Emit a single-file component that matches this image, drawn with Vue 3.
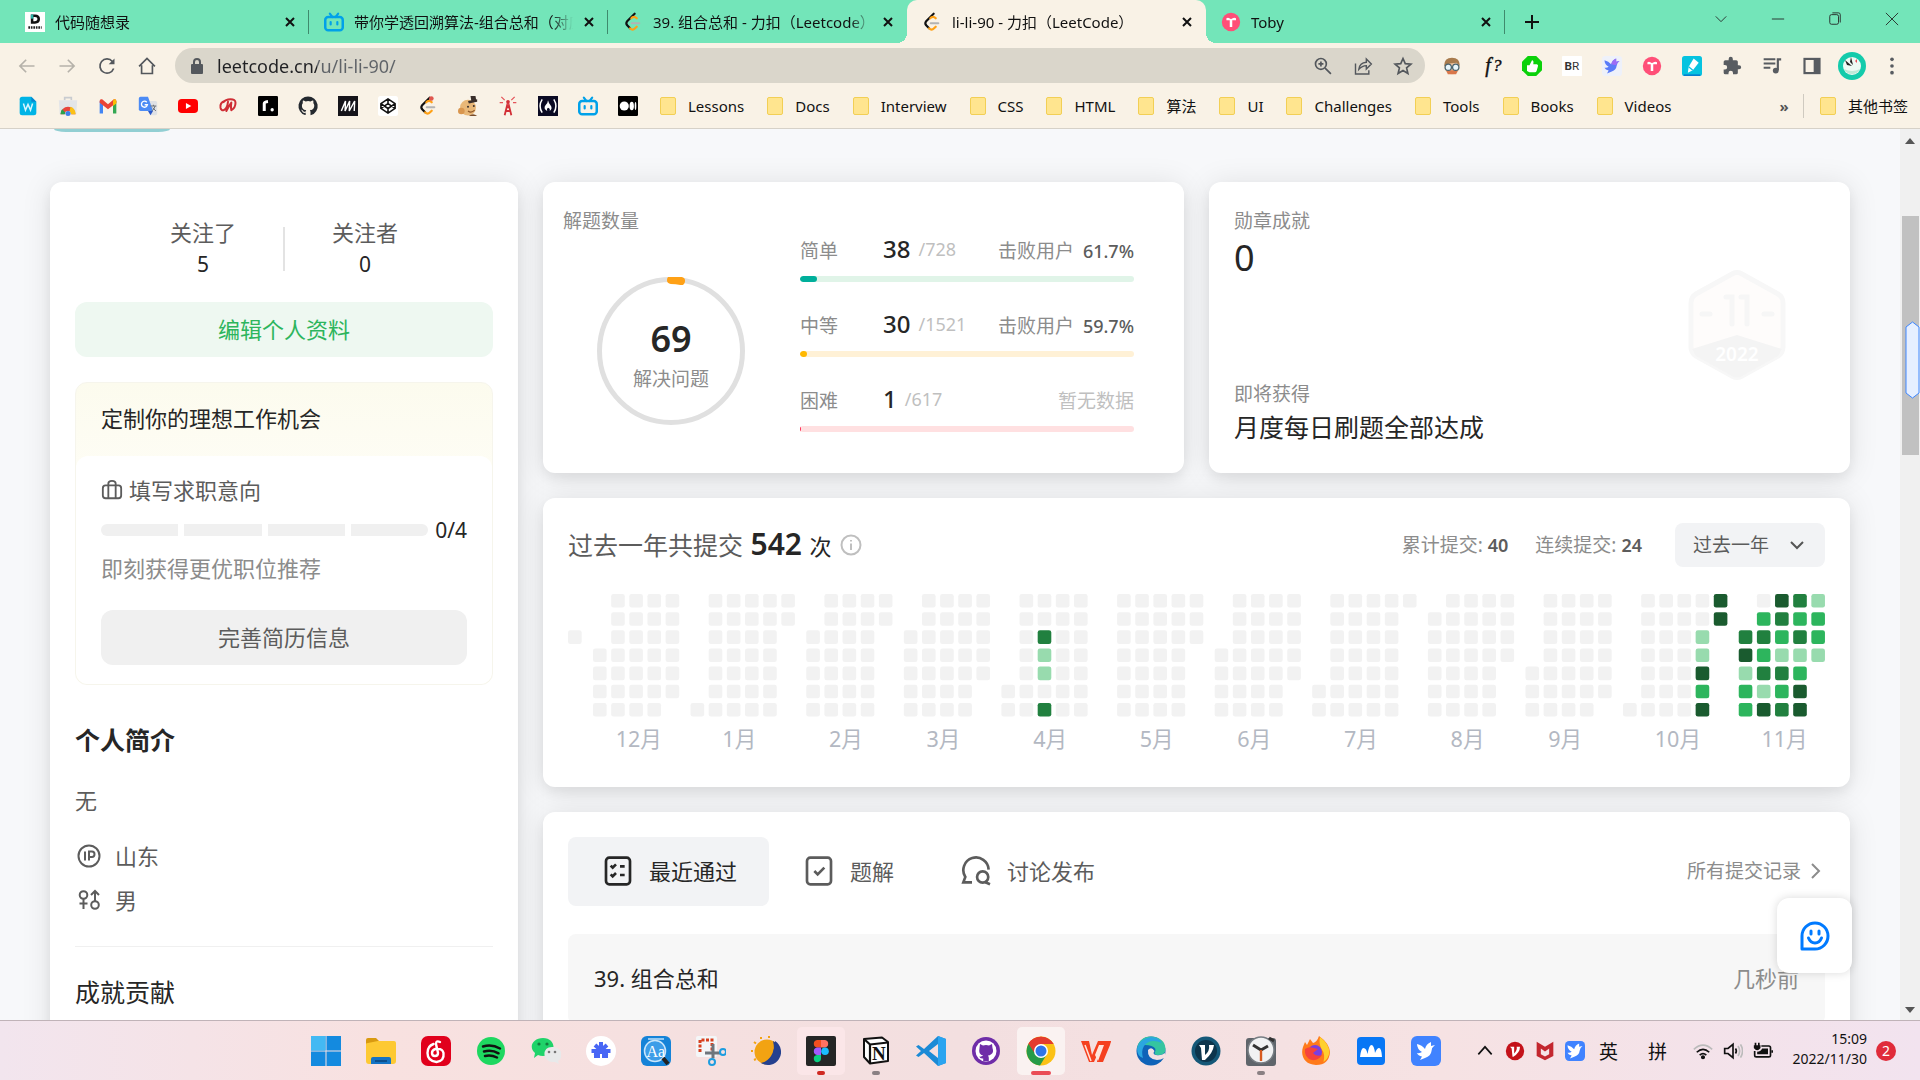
<script setup>
import { ref } from 'vue'

const leetLogo =
  '<path d="M14 2 5 11q-2 2.500 0 5l3.500 3.600" fill="none" stroke="#111" stroke-width="2.600" stroke-linecap="round"/><path d="M8.500 19.600q3 3 6 0l2-2M10 7.500l1.500-1.200q2.500-1.500 5 1.200" fill="none" stroke="#ffa116" stroke-width="2.600" stroke-linecap="round"/><path d="M10.500 13.500h9" stroke="#b3b3b3" stroke-width="2.600" stroke-linecap="round"/>'
const biliLogo =
  '<path d="m7 2 3 4M17 2l-3 4" stroke="#00a1e9" stroke-width="2.600" stroke-linecap="round"/><rect x="1.500" y="6" width="21" height="16" rx="3.500" fill="none" stroke="#00a1e9" stroke-width="3"/><path d="M8 12v3M16 12v3" stroke="#00a1e9" stroke-width="2.600" stroke-linecap="round"/>'
const tobyLogo =
  '<circle cx="12" cy="12" r="11" fill="#ff4f78"/><path d="M6.500 7.500q2-1.500 3.500 0 2 1.500 4 0 2-1.500 4 0v2.500h-4.500v8h-3v-8h-4z" fill="#fff"/>'
const birdShape =
  'M3 5q5 1 8 5 1-5 6-7v4l4-1q-3 2-3.500 6-.500 5-6.500 7l-5 2 2-3.500q-4-1-5-3.500 3 .5 5-1-5-3-5-8z'

const tabs = ref([
  {
    title: '代码随想录',
    icon: '<rect width="24" height="24" fill="#fff"/><path d="M7 3h5q6 0 6 5.500T12 14H7zM10 6v5h2q3 0 3-2.500T12 6z" fill="#111" fill-rule="evenodd"/><path d="M7 3h3v5H7z" fill="#29b6a8"/><path d="M4 18.500h16" stroke="#222" stroke-width="3" stroke-dasharray="2 1"/>',
  },
  { title: '带你学透回溯算法-组合总和（对应', icon: biliLogo },
  { title: '39. 组合总和 - 力扣（Leetcode）', icon: leetLogo },
  { title: 'li-li-90 - 力扣（LeetCode）', icon: leetLogo, active: true },
  { title: 'Toby', icon: tobyLogo },
])

const navIcons = [
  { label: '后退', dim: true, icon: '<path d="M21 12H4m7-7.500L3.500 12l7.500 7.500"/>' },
  { label: '前进', dim: true, icon: '<path d="M3 12h17m-7-7.500 7.500 7.500-7.500 7.500"/>' },
  { label: '重新加载', icon: '<path d="M20 15a8.500 8.500 0 1 1-1.500-8.500l1 1.500"/><path d="M21 3v7h-7z" fill="#53575c" stroke="none"/>' },
  { label: '主页', icon: '<path d="M2.500 12.500 12 3l9.500 9.500M5.500 11v10h13V11"/>' },
]

const addressIcons = [
  { label: '缩放', icon: '<circle cx="9.500" cy="9.500" r="6.500"/><path d="m14.500 14.500 7 7M9.500 6.500v6M6.500 9.500h6"/>' },
  { label: '分享', icon: '<path d="M3 9v12.500h16V17M7 16q1-8 9-8.500V3.500l6 6-6 6v-4q-5 0-9 4.500z" stroke-width="1.700"/>' },
  { label: '收藏', icon: '<path d="m12 3 2.700 6.200 6.800.6-5.200 4.500 1.600 6.700L12 17.500 6.100 21l1.600-6.700-5.200-4.500 6.800-.6z"/>' },
]

const extensions = [
  '<circle cx="12" cy="13" r="9" fill="#f1c7a3"/><path d="M2.500 12q0-10 9.500-10t9.500 10l-4-4-8 1-5 2z" fill="#a87b4d"/><path d="M5 17h14l-2 5H7z" fill="#d9774a"/><circle cx="7.500" cy="13.500" r="3.800" fill="#e9f6fb" stroke="#49646f" stroke-width="1.500"/><circle cx="16.500" cy="13.500" r="3.800" fill="#e9f6fb" stroke="#49646f" stroke-width="1.500"/>',
  '<text x="4" y="19" font-family="Liberation Serif, serif" font-style="italic" font-size="24" fill="#111" stroke="#111" stroke-width=".5">f</text><text x="13" y="18" font-family="Liberation Serif, serif" font-style="italic" font-size="21" fill="#111" stroke="#111" stroke-width=".5">?</text>',
  '<path d="M7 0h10l7 7v10l-7 7H7l-7-7V7z" fill="#0bd10b"/><path d="M6 11h3l3-6q2.500 0 1.500 5H18q2 1 1 3l-1.500 5q-.500 1.500-2 1.500H9L6 18z" fill="#fff"/>',
  '<rect width="24" height="24" rx="1" fill="#fff"/><text x="3" y="17" font-family="Roboto, sans-serif" font-size="14" font-weight="700" fill="#333">B<tspan font-weight="400">R</tspan></text>',
  '<rect width="24" height="24" rx="4" fill="#eef1fa"/><path d="' + birdShape + '" fill="#5a7cf8"/><path d="M11 10q1-5 6-7v4l4-1q-3 2-4 5z" fill="#9d6cf5"/>',
  tobyLogo,
  '<rect width="24" height="24" rx="3" fill="#06c3e0"/><path d="m14 3 6 5-7 9-6 3 1-7z" fill="#fff"/><path d="m8 13 5 4" stroke="#06c3e0" stroke-width="1.500"/><path d="M2 23h20" stroke="#067fd0" stroke-width="2"/>',
  '<path d="M20.500 11H19V7a2 2 0 0 0-2-2h-4V3.500a2.500 2.500 0 0 0-5 0V5H4a2 2 0 0 0-2 2v3.800h1.500a2.700 2.700 0 0 1 0 5.400H2V20a2 2 0 0 0 2 2h3.800v-1.500a2.700 2.700 0 0 1 5.400 0V22H17a2 2 0 0 0 2-2v-4h1.500a2.500 2.500 0 0 0 0-5z" fill="#585c61"/>',
  '<path d="M2 4h14M2 9h14M2 14h8" stroke="#585c61" stroke-width="2.400"/><path d="M19 17V4h4" fill="none" stroke="#585c61" stroke-width="2.600"/><circle cx="16.500" cy="17.500" r="3.500" fill="#585c61"/>',
  '<rect x="3" y="3.500" width="18" height="17" fill="none" stroke="#585c61" stroke-width="2.600"/><path d="M14 3.500h7v17h-7z" fill="#585c61"/>',
]

const bookmarkIcons = [
  '<path d="M5 1h11l6 6v13q0 3-3 3H5q-3 0-3-3V4q0-3 3-3z" fill="#00b4e6"/><path d="M16 1v6h6z" fill="#0787cf"/><path d="m6.500 9 2.500 8 3-7 3 7 2.500-8" fill="none" stroke="#d8f6ff" stroke-width="1.800"/>',
  '<path d="M8 5V2h8v3" fill="none" stroke="#c9ccd0" stroke-width="2"/><path d="M1 5h22l-1 17H2z" fill="#e3e5e8"/><path d="M3 22a9 9 0 0 1 18 0h-5a4 4 0 0 0-8 0z" fill="#e8453c"/><path d="M3 22q0-4 2-6l4 4-1 2z" fill="#2ba24c"/><path d="M15 13q6 2 6 9h-5l-2-4z" fill="#fbc116"/><circle cx="12" cy="21" r="3" fill="#3f7fe8"/>',
  '<path d="M2 21V6l4 3v12z" fill="#4285f4"/><path d="M18 9l4-3v15h-4z" fill="#34a853"/><path d="M2 6q0-3 3-2l7 6 7-6q3-1 3 2v2l-10 8L2 8z" fill="#ea4335"/><path d="m18 6 1-2q3-1 3 2v3l-4 3z" fill="#fbbc04"/>',
  '<path d="M9 6h12q2 0 2 2v13q0 2-2 2h-6z" fill="#dfe1e5"/><path d="M3 1h9l6 17H3q-2 0-2-2V3q0-2 2-2z" fill="#4c8bf5"/><path d="m12 18h6l-3 5z" fill="#2a56c6"/><path d="M10.500 7.500a3.600 3.600 0 1 0 .8 3H8" fill="none" stroke="#fff" stroke-width="1.600"/><path d="M15 12h7m-3.500-1.500V12m2 0q-1 4-4 6m1-4 4 4" fill="none" stroke="#6b7077" stroke-width="1.200"/>',
  '<rect y="3.500" width="24" height="17" rx="4.500" fill="#f00"/><path d="m9.500 8.500 6.500 3.500-6.500 3.500z" fill="#fff"/>',
  '<path d="M8 6Q2 8 3 14q1 4 4 3 4-2 5-10-1 6-2 11 3-6 6-10-1 5 0 9 5-3 5-9 0-4-6-4-6 0-9 4" fill="none" stroke="#cf2e35" stroke-width="2.400" stroke-linejoin="round"/>',
  '<rect width="24" height="24" rx="1.500"/><path d="M7.500 18V9q0-2 4.500-2.500" fill="none" stroke="#fff" stroke-width="3.600"/><circle cx="17" cy="16.500" r="2" fill="#fff"/>',
  '<path d="M12 .5a11.500 11.500 0 0 0-3.600 22.400c.6.1.8-.2.800-.5v-2.200c-3.200.7-3.900-1.300-3.900-1.300-.5-1.300-1.300-1.700-1.300-1.700-1-.7.1-.7.100-.7 1.200.1 1.800 1.200 1.800 1.200 1 1.800 2.700 1.300 3.300 1 .1-.8.400-1.300.7-1.600-2.500-.3-5.200-1.300-5.200-5.700 0-1.200.4-2.300 1.200-3.100-.1-.3-.5-1.500.1-3 0 0 1-.3 3.200 1.200a11 11 0 0 1 5.800 0c2.200-1.500 3.200-1.200 3.200-1.200.6 1.500.2 2.700.1 3 .8.800 1.200 1.900 1.200 3.100 0 4.400-2.700 5.400-5.300 5.700.4.400.8 1.100.8 2.100v3.200c0 .3.200.7.800.5A11.500 11.500 0 0 0 12 .5z" fill="#24292f"/>',
  '<rect width="24" height="24" fill="#15141a"/><path d="m4 18 5-12-.5 12 5.500-12-.5 12L20 6l-.5 12" fill="none" stroke="#fff" stroke-width="1.700"/>',
  '<rect width="24" height="24" rx="3" fill="#fff"/><path d="m12 3.500 8.500 5.600v5.800L12 20.500l-8.500-5.600V9.100zM12 3.500v5.600m0 11.400v-5.600M3.500 9.100 12 15l8.500-5.900M3.500 14.900 12 9.100l8.500 5.800" fill="none" stroke="#111" stroke-width="1.900" stroke-linejoin="round"/>',
  leetLogo + '<circle cx="16" cy="3" r="2.800" fill="#e0574f"/>',
  '<circle cx="12" cy="14" r="9.500" fill="#e9b878"/><circle cx="4" cy="18" r="4" fill="#d9964f"/><path d="M12 6 23 4v3l-10 2zM15 0h6l1 6h-6z" fill="#3a2f2b"/><circle cx="12" cy="13" r="1.200" fill="#3a2f2b"/><circle cx="19" cy="12" r="1.200" fill="#3a2f2b"/><path d="M12 18q4 3 8-1" fill="none" stroke="#8d5526" stroke-width="1.500"/><path d="M13 24q5-4 10 0z" fill="#7a4d2b"/>',
  '<path d="m8 23 3.500-14h1L16 23M9 18h6m-5-4.500h4" stroke="#d22f36" stroke-width="2.200" fill="none"/><path d="M12 8v3M4 1l4 4M20 1l-4 4M2 8h4m16 0h-4" stroke="#e4545a" stroke-width="1.500"/><circle cx="12" cy="7" r="2.200" fill="#d22f36"/>',
  '<rect width="24" height="24" fill="#0a0a23"/><path d="M5 4q-5 8 0 16M19 4q5 8 0 16" fill="none" stroke="#fff" stroke-width="1.800"/><path d="M12 5q1 4 3 6 3 4-1 7 1-3-2-4-2 1-1 4-5-3-2-7 3-3 3-6z" fill="#fff"/>',
  biliLogo,
  '<rect width="24" height="24" rx="1.500"/><circle cx="7.500" cy="12" r="5.500" fill="#fff"/><ellipse cx="16.500" cy="12" rx="2.600" ry="5.200" fill="#fff"/><ellipse cx="21" cy="12" rx="1" ry="4.700" fill="#fff"/>',
]

const folders = ['Lessons', 'Docs', 'Interview', 'CSS', 'HTML', '算法', 'UI', 'Challenges', 'Tools', 'Books', 'Videos']

const levels = [
  { key: 'easy', name: '简单', done: 38, total: 728, beat: '61.7%', bar: 5 },
  { key: 'medium', name: '中等', done: 30, total: 1521, beat: '59.7%', bar: 2 },
  { key: 'hard', name: '困难', done: 1, total: 617, beat: '', bar: 0.3 },
]

/* Submission levels by "month-day". */
const heat = {
  '4-12': 3, '4-13': 1, '4-14': 1, '4-16': 3,
  '10-25': 1, '10-26': 1, '10-27': 4, '10-28': 2, '10-29': 4, '10-30': 4, '10-31': 4,
}
;[3, 4, 1, 2, 2, 0, 2, 3, 2, 3, 1, 4, 4, 3, 2, 1, 3, 2, 3, 3, 2, 3, 1, 2, 4, 4, 1, 2, 2, 1].forEach((v, i) => {
  heat['11-' + (i + 1)] = v
})

const STEP = 16
const cells = [{ x: 0, y: 2 * STEP, level: 0 }]
const months = []
let left = STEP + 6
for (let m = 0; m < 12; m++) {
  const first = new Date(2021, 11 + m, 1)
  const days = new Date(2021, 12 + m, 0).getDate()
  const month = first.getMonth() + 1
  for (let d = 1; d <= days; d++) {
    const slot = first.getDay() + d - 1
    cells.push({
      x: left + Math.floor(slot / 7) * STEP,
      y: (slot % 7) * STEP,
      level: heat[month + '-' + d] || 0,
    })
  }
  const weeks = Math.floor((first.getDay() + days) / 7) + 1
  months.push({ name: month + '月', x: left + (weeks * STEP) / 2 - 20 })
  left += weeks * STEP + 6
}

const range = ref('过去一年')

const sections = [
  { name: '最近通过', active: true, icon: '<rect x="3" y="2" width="18" height="20" rx="2.500"/><path d="m6.500 8 1.500 1.500L10.500 7M6.500 14.500 8 16l2.500-2.500M13.500 8.500H17M13.500 15H17"/>' },
  { name: '题解', icon: '<rect x="3" y="2" width="18" height="20" rx="2.500"/><path d="m8.500 12 2.500 2.500 5-5"/>' },
  { name: '讨论发布', icon: '<path d="M21.500 11A9.500 9.500 0 1 0 4 16.500L2.500 20.500H9"/><circle cx="17" cy="16.500" r="4.200"/><path d="M19 20.500 22.500 22"/>' },
]

const apps = [
  { name: '开始', icon: '<path d="M0 0h14.500v14.500H0zM15.500 0H30v14.500H15.500zM0 15.500h14.500V30H0zM15.500 15.500H30V30H15.500z" fill="#148adf"/><path d="M0 0h14.500v14.500H0z" fill="#43b9f3"/>' },
  { name: '文件资源管理器', icon: '<path d="M0 4q0-2 2-2h8l3 3v6H0z" fill="#d99a10"/><path d="M0 8q0-1 2-1l10-2h16q2 0 2 2v18q0 3-3 3H3q-3 0-3-3z" fill="#fdc933"/><path d="M5 28v-5q0-2 2-2h16q2 0 2 2v5z" fill="#1473c4"/><path d="M9 25h12" stroke="#0b4f8d" stroke-width="2"/>' },
  { name: '网易云音乐', icon: '<rect width="30" height="30" rx="7" fill="#e1001c"/><path d="M19 6q-4-2-4 2l2 9q0 3-3 3t-3-3q0-3 3.500-4 7-1 8 4 1 8-7 9-9-1-9-9 0-7 6-9" fill="none" stroke="#fff" stroke-width="2.400" stroke-linecap="round"/>' },
  { name: 'Spotify', icon: '<circle cx="15" cy="15" r="14" fill="#1ed760"/><path d="M7 10.500q9-2.500 17 2M8 15.500q8-2 14.500 1.800M9 20q6-1.500 12 1.500" fill="none" stroke="#111" stroke-width="2.500" stroke-linecap="round"/>' },
  { name: '微信', icon: '<path d="M12 2c14 0 14 18 0 18q-3 0-5-1l-4 3 1-5C-3 11 2 2 12 2z" fill="#1fd36a"/><circle cx="8" cy="8" r="1.600" fill="#137c3f"/><circle cx="16" cy="8" r="1.600" fill="#137c3f"/><path d="M21 11c12 0 11 12 6 14l1 3-4-2c-13 1-14-15-3-15z" fill="#e8e9ea"/><circle cx="18" cy="16" r="1.300" fill="#777"/><circle cx="24" cy="16" r="1.300" fill="#777"/>' },
  { name: '百度网盘', icon: '<circle cx="15" cy="15" r="15" fill="#fff"/><path d="M15 6v12M5.500 15h19M9 9l12 11M21 9 9 20" stroke="#4866f5" stroke-width="4"/><path d="M8 16h14v6H8z" fill="#4866f5"/><path d="M15 18v5" stroke="#fff" stroke-width="2"/>' },
  { name: '欧路词典', icon: '<rect width="30" height="30" rx="6" fill="#1583d8"/><circle cx="14" cy="15" r="10.500" fill="#3d9de8" stroke="#c9e6fb" stroke-width="1.500"/><text x="5.500" y="20.500" font-family="Liberation Serif, serif" font-size="16" fill="#fff">Aa</text><path d="m22 22 5 6" stroke="#222" stroke-width="4"/><path d="M7 3h16" stroke="#bfe1fa" stroke-width="1.500"/>' },
  { name: '截图工具', icon: '<rect width="21" height="21" rx="2" fill="#f4f6f8"/><path d="M4 16V4h12v12" fill="none" stroke="#d8401f" stroke-width="3" stroke-dasharray="3 1.500"/><path d="M17 8v14M9 17h15" stroke="#6e757c" stroke-width="3"/><circle cx="16" cy="26" r="3" fill="none" stroke="#1d9de0" stroke-width="2"/><circle cx="27" cy="16" r="3" fill="none" stroke="#1d9de0" stroke-width="2"/>' },
  { name: '夜间模式', icon: '<circle cx="16" cy="16" r="12.500" fill="#f2a312"/><path d="M24 5a12.500 12.500 0 0 1-14 22Q23 24 24 5z" fill="#25418f"/><path d="M22 5q9 5 6 14-4 11-16 9 14-6 10-23z" fill="#25418f"/><path d="M10 1v2M18 0v2M3 6l2 1.500M0 15h2M3 24l2-1" stroke="#f2a312" stroke-width="2"/>' },
  { name: 'Figma', state: 'open', icon: '<rect width="30" height="30" rx="2" fill="#252626"/><path d="M15 4h-4a3.800 3.800 0 0 0 0 7.500h4z" fill="#f24e1e"/><path d="M15 4h4a3.800 3.800 0 0 1 0 7.500h-4z" fill="#ff7262"/><path d="M15 11.500h-4a3.800 3.800 0 0 0 0 7.500h4z" fill="#a259ff"/><circle cx="19" cy="15.200" r="3.800" fill="#1abcfe"/><path d="M15 19h-4a3.600 3.600 0 1 0 4 3.600z" fill="#0acf83"/>' },
  { name: 'Notion', state: 'running', icon: '<path d="m3 3 18-1.500 6 4.500v19L9 27.500 3 21z" fill="#fff" stroke="#111" stroke-width="2" stroke-linejoin="round"/><path d="m3 3 6 5.500v19M9 8.500 27 6.500" fill="none" stroke="#111" stroke-width="2.200"/><text x="11" y="24" font-family="Liberation Serif, serif" font-weight="700" font-size="19" fill="#111">N</text>' },
  { name: 'VS Code', icon: '<path d="M22 0 8 13 2.500 9 0 10.500 5 15l-5 4.500L2.500 21 8 17l14 13 8-3V3zM22 8v14l-9-7z" fill="#1b8ad6" fill-rule="evenodd"/><path d="m22 0 8 3v24l-8 3z" fill="#2aa4f0"/>' },
  { name: 'GitHub Desktop', icon: '<circle cx="15" cy="15" r="14" fill="#6f2da8"/><circle cx="15" cy="15" r="10.500" fill="#fff"/><path d="m9 8 3 1.500q3-1 6 0L21 8l.5 4q1.500 4-1 6-2 1.500-3.500 1.500.8 1 .8 2.500v3h-5.600v-2.500q-3 .5-4-2 2 .500 4-1Q7 19 8.500 12z" fill="#6f2da8"/>' },
  { name: 'Chrome', state: 'focus', icon: '<circle cx="15" cy="15" r="14.500" fill="#fbc116"/><path d="M2.500 7.700A14.500 14.500 0 0 1 27.500 8H15z" fill="#e33b2e"/><path d="M2.500 7.700A14.500 14.500 0 0 0 14 29.500L21 18l-6 3z" fill="#269b48"/><path d="M2.500 7.700A14.500 14.500 0 0 1 27.500 8H15q-6 1-6.500 9z" fill="#e33b2e"/><circle cx="15" cy="15" r="7" fill="#fff"/><circle cx="15" cy="15" r="5.500" fill="#2f75e8"/>' },
  { name: 'WPS', icon: '<path d="M0 5h8l3 14L17 5h13l-9 21h-5l1-9-4 9H8z" fill="#f5401f"/><path d="m18 9-4 10 3 6 6-16z" fill="#ffe4db"/><path d="M19 5h11l-1 4-7 17h-4l6-17h-6z" fill="#f5401f"/><path d="M4 9l6 16" stroke="#ffe4db" stroke-width="1.500"/>' },
  { name: 'Edge', icon: '<circle cx="15" cy="15" r="14.500" fill="#0f63b8"/><path d="M1 13Q3 0 16 .5 29 2 29.500 13q0 6-7 6-4 0-4-2 3-5-3-7Q6 7 1 13z" fill="#35c5a0"/><path d="M1 13Q4 2 15 1q8 0 11 6Q14 2 8 10q-3 5-1 12Q1 20 1 13z" fill="#2ba6e0"/><path d="M12 14q-1 9 9 10 4 0 7-2l2 2-1-7q-4 3-9 2-4-1-1.500-4-3-5-6.500-1z" fill="#f3e1e2"/>' },
  { name: 'V2rayN', icon: '<circle cx="15" cy="15" r="14.500" fill="#155878"/><circle cx="15" cy="15" r="11" fill="#0d354c"/><path d="M8 9h6v10q5-4 4-10h5q-1 8-9 15h-3l-1-12z" fill="#fff"/>' },
  { name: '时钟', state: 'running', icon: '<rect y="2" width="30" height="28" rx="3" fill="#5f656b"/><circle cx="15" cy="14" r="13" fill="#f1f2f3" stroke="#777d83" stroke-width="1.500"/><path d="m7 9 8 5 7-4" fill="none" stroke="#333" stroke-width="3"/><path d="M15 14v11" stroke="#d85b1f" stroke-width="2.400"/><path d="m23 2 5 3" stroke="#333" stroke-width="3"/>' },
  { name: 'Firefox', icon: '<path d="M15 29C4 29-1 20 2 11l2-5 2 3 3-6 3 4q4-1 6-7 10 7 11 16-1 13-14 13z" fill="#ff7a1a"/><path d="M19 1q9 7 9.500 15-1 7-6 10 2-8-2-13-3-6-1.500-12z" fill="#ffd02e"/><circle cx="14" cy="16" r="7" fill="#7a3fe0"/><path d="M4 13q4-3 9-1l4 1-5 4q3 4 9 2-4 6-10 5-8-2-7-11z" fill="#f5423c"/>' },
  { name: '腾讯会议', icon: '<rect x="1" y="1" width="28" height="28" rx="4" fill="#0877f5"/><path d="M4 21q1-9 3.500-9 3 0 4 6 1.500-9 4-9t3.500 8q2-5 4-5 2.500 0 3 9z" fill="#fff"/>' },
  { name: '飞书', icon: '<rect width="30" height="30" rx="6" fill="#4083ff"/><path transform="translate(3 3)" d="' + birdShape + '" fill="#fff"/>' },
]

const trayApps = [
  '<circle cx="12" cy="12" r="11" fill="#c4121a"/><path d="M6 7h5v8q4-4 3-8h4q0 7-8 12H9L8 9z" fill="#fff"/>',
  '<path d="m2 1 10 6 10-6v17l-10 5-10-5zM7 9v7l5 2.500 5-2.500V9l-5 3.500z" fill="#c3272f" fill-rule="evenodd"/>',
  '<rect width="24" height="24" rx="5" fill="#4083ff"/><path d="' + birdShape + '" fill="#fff"/>',
]
</script>

<template>
  <div class="window">
    <header class="chrome">
      <div class="tabstrip">
        <div class="tabs">
          <div v-for="t in tabs" :key="t.title" class="tab" :class="{ active: t.active }">
            <svg class="i20" viewBox="0 0 24 24" v-html="t.icon"></svg>
            <span class="tab-title">{{ t.title }}</span>
            <button class="tab-close" aria-label="关闭标签页">
              <svg viewBox="0 0 12 12"><path d="m2 2 8 8m0-8-8 8" /></svg>
            </button>
          </div>
        </div>
        <button class="new-tab" aria-label="新标签页">
          <svg viewBox="0 0 16 16"><path d="M8 1v14M1 8h14" /></svg>
        </button>
        <div class="win-controls">
          <button aria-label="搜索标签页"><svg viewBox="0 0 16 16"><path d="m2 5 6 6 6-6" /></svg></button>
          <button aria-label="最小化"><svg viewBox="0 0 16 16"><path d="M1 8h14" /></svg></button>
          <button aria-label="还原">
            <svg viewBox="0 0 16 16"><rect x="2" y="3" width="10" height="11" rx="2" /><path d="M5 1h7q2 0 2 2v9" /></svg>
          </button>
          <button aria-label="关闭"><svg viewBox="0 0 16 16"><path d="m1 1 14 14m0-14L1 15" /></svg></button>
        </div>
      </div>

      <div class="toolbar">
        <button v-for="n in navIcons" :key="n.label" class="tool" :class="{ dim: n.dim }" :aria-label="n.label">
          <svg class="line-icon" viewBox="0 0 24 24" v-html="n.icon"></svg>
        </button>
        <div class="address">
          <svg class="lock" viewBox="0 0 12 16">
            <rect y="6" width="12" height="10" rx="1" fill="#54585d" />
            <path d="M3 7V4a3 3 0 0 1 6 0v3" fill="none" stroke="#54585d" stroke-width="2" />
          </svg>
          <input aria-label="地址" value="leetcode.cn/u/li-li-90/" />
          <button v-for="a in addressIcons" :key="a.label" class="tool" :aria-label="a.label">
            <svg class="line-icon" viewBox="0 0 24 24" v-html="a.icon"></svg>
          </button>
        </div>
        <div class="extensions">
          <button v-for="(e, i) in extensions" :key="i" class="tool" :aria-label="'扩展程序 ' + (i + 1)">
            <svg class="i20" viewBox="0 0 24 24" v-html="e"></svg>
          </button>
          <button class="tool" aria-label="个人资料">
            <svg class="avatar" viewBox="0 0 28 28">
              <circle cx="14" cy="14" r="14" fill="#14cbab" />
              <circle cx="14" cy="14" r="9" fill="#eefaf4" />
              <path d="m7 8 7 6-5-1zM13 5l2 8-3-3z" fill="#222" />
              <path d="m17 9 2-2v4z" fill="#e8505b" />
              <path d="M6 17q8 4 16 0-2 5-8 5t-8-5z" fill="#bfe9d8" />
            </svg>
          </button>
          <button class="tool" aria-label="更多">
            <svg class="i20" viewBox="0 0 24 24" fill="#585c61">
              <circle cx="12" cy="4" r="2.200" /><circle cx="12" cy="12" r="2.200" /><circle cx="12" cy="20" r="2.200" />
            </svg>
          </button>
        </div>
      </div>

      <nav class="bookmarks" aria-label="书签">
        <a v-for="(b, i) in bookmarkIcons" :key="i" href="#" class="tool" :aria-label="'书签 ' + (i + 1)">
          <svg class="i20" viewBox="0 0 24 24" v-html="b"></svg>
        </a>
        <div class="folders">
          <a v-for="f in folders" :key="f" href="#" class="folder"><span class="folder-icon"></span>{{ f }}</a>
        </div>
        <button class="overflow" aria-label="更多书签">»</button>
        <a href="#" class="folder others"><span class="folder-icon"></span>其他书签</a>
      </nav>
    </header>

    <div class="page">
      <main class="viewport">
        <div class="banner-edge"></div>
        <div class="columns">
          <aside class="card profile">
            <div class="follow">
              <div><span>关注了</span><b>5</b></div>
              <i></i>
              <div><span>关注者</span><b>0</b></div>
            </div>
            <button class="edit">编辑个人资料</button>

            <section class="job">
              <h3>定制你的理想工作机会</h3>
              <div class="job-body">
                <p class="job-title">
                  <svg viewBox="0 0 24 24">
                    <rect x="2" y="7" width="20" height="14" rx="3" />
                    <path d="M8 21V5q0-3 4-3t4 3v16" />
                  </svg>
                  填写求职意向
                </p>
                <div class="job-steps">
                  <div class="segments"><span v-for="n in 4" :key="n"></span></div>
                  0/4
                </div>
                <p class="job-note">即刻获得更优职位推荐</p>
                <button class="resume">完善简历信息</button>
              </div>
            </section>

            <h2 class="bold">个人简介</h2>
            <p class="bio">无</p>
            <ul class="facts">
              <li>
                <svg viewBox="0 0 28 28">
                  <circle cx="14" cy="14" r="10.500" />
                  <path d="M10 9.500v9M14 18.500v-9h3q2.500 0 2.500 2.700T17 15h-3" />
                </svg>
                山东
              </li>
              <li>
                <svg viewBox="0 0 28 28">
                  <circle cx="8.500" cy="9" r="3.800" /><path d="M8.500 13v10M4.500 17.500h8" />
                  <circle cx="20" cy="19" r="3.800" /><path d="M20 15V5m-4 4 4-4 4 4" />
                </svg>
                男
              </li>
            </ul>
            <hr />
            <h2>成就贡献</h2>
          </aside>

          <div class="right">
            <div class="top-cards">
              <section class="card solved">
                <div class="solved-left">
                  <h4>解题数量</h4>
                  <div class="ring">
                    <svg viewBox="0 0 148 148">
                      <circle cx="74" cy="74" r="71.500" fill="none" stroke="#e0e0e0" stroke-width="5" />
                      <path d="M74 3a71 71 0 0 1 10 1" fill="none" stroke="#ffa116" stroke-width="8" stroke-linecap="round" />
                    </svg>
                    <div class="ring-text"><b>69</b><span>解决问题</span></div>
                  </div>
                </div>
                <div class="levels">
                  <div v-for="l in levels" :key="l.key" :class="l.key">
                    <div class="level-row">
                      <span class="level-name">{{ l.name }}</span>
                      <span class="level-count"><b>{{ l.done }}</b><i>/{{ l.total }}</i></span>
                      <span v-if="l.beat" class="beat">击败用户 <b>{{ l.beat }}</b></span>
                      <span v-else class="beat none">暂无数据</span>
                    </div>
                    <div class="level-bar"><span :style="{ width: l.bar + '%' }"></span></div>
                  </div>
                </div>
              </section>

              <section class="card medals">
                <div class="medal-text">
                  <h4>勋章成就</h4>
                  <p class="medal-count">0</p>
                  <h4 class="soon">即将获得</h4>
                  <p class="medal-next">月度每日刷题全部达成</p>
                </div>
                <svg class="medal" viewBox="0 0 98 110">
                  <path d="M44 4q5-3 10 0l36 20q5 3 5 9v44q0 6-5 9l-36 20q-5 3-10 0L8 86q-5-3-5-9V33q0-6 5-9z" fill="#fefcfb" stroke="#f7f7f7" stroke-width="5" />
                  <path d="m4 79 45-14 45 14-4 7-36 20q-5 3-10 0L8 86z" fill="#f4f4f4" />
                  <path d="M38 27h6v27M53 27h6v27M14 44h8M76 44h8" fill="none" stroke="#f6f6f6" stroke-width="5" stroke-linecap="round" />
                  <text x="49" y="91" text-anchor="middle">2022</text>
                </svg>
              </section>
            </div>

            <section class="card calendar">
              <div class="cal-head">
                <p class="cal-title">过去一年共提交 <b>542</b> <em>次</em></p>
                <svg class="info" viewBox="0 0 22 22">
                  <circle cx="11" cy="11" r="9.500" /><path d="M11 9.500V16M11 6v1.500" />
                </svg>
                <p class="stat first">累计提交: <b>40</b></p>
                <p class="stat">连续提交: <b>24</b></p>
                <div class="picker">
                  <select v-model="range" aria-label="时间范围"><option>过去一年</option></select>
                  <svg viewBox="0 0 16 16"><path d="m2 5 6 6 6-6" /></svg>
                </div>
              </div>
              <svg class="heatmap" viewBox="0 0 1108 148">
                <rect v-for="(c, i) in cells" :key="i" :x="c.x" :y="c.y" width="12" height="12" rx="2" :class="'l' + c.level" />
                <text v-for="m in months" :key="m.name" :x="m.x" y="135">{{ m.name }}</text>
              </svg>
            </section>

            <section class="card recent">
              <div class="recent-head">
                <button v-for="s in sections" :key="s.name" class="section-tab" :class="{ active: s.active }">
                  <svg viewBox="0 0 24 24" v-html="s.icon"></svg>{{ s.name }}
                </button>
                <a href="#" class="all">所有提交记录<svg viewBox="0 0 16 16"><path d="m5 1 7 7-7 7" /></svg></a>
              </div>
              <a href="#" class="problem">39. 组合总和<span>几秒前</span></a>
            </section>
          </div>
        </div>
        <button class="help" aria-label="反馈">
          <svg viewBox="0 0 32 32">
            <path d="M3 29V16A13 13 0 1 1 16 29z" />
            <path d="M9.500 18q2 5 6.500 5t6.500-5" />
            <path d="M12 11v3M20 11v3" />
          </svg>
        </button>
      </main>
      <div class="scrollbar">
        <svg class="up" viewBox="0 0 10 6"><path d="M0 6 5 0l5 6z" /></svg>
        <div class="thumb"></div>
        <svg class="down" viewBox="0 0 10 6"><path d="m0 0 5 6 5-6z" /></svg>
        <svg class="handle" viewBox="0 0 15 78">
          <path d="M1 6 7.500 1 14 6v66l-6.500 5L1 72z" />
        </svg>
      </div>
    </div>

    <footer class="taskbar">
      <div class="apps">
        <button v-for="a in apps" :key="a.name" class="app" :class="a.state" :aria-label="a.name">
          <svg viewBox="0 0 30 30" v-html="a.icon"></svg>
        </button>
      </div>
      <div class="tray">
        <svg class="tray-icon thin" viewBox="0 0 24 24"><path d="m4 16 8-9 8 9" /></svg>
        <svg v-for="(t, i) in trayApps" :key="i" class="tray-icon" viewBox="0 0 24 24" v-html="t"></svg>
        <span class="ime">英</span>
        <span class="ime">拼</span>
        <svg class="tray-icon thin" viewBox="0 0 24 24">
          <path d="M1 10q11-10 22 0" stroke="#bbb" /><path d="M4.500 13.500q7.500-7 15 0M8 17q4-3.500 8 0" />
          <circle cx="12" cy="19.500" r="1.500" fill="#111" />
        </svg>
        <svg class="tray-icon thin" viewBox="0 0 24 24">
          <path d="M2 9v6h4l6 5V4L6 9zM15 9q2 3 0 6" /><path d="M18 6q4 6 0 12M21 4q5 8 0 16" stroke="#bbb" />
        </svg>
        <svg class="tray-icon thin" viewBox="0 0 24 24">
          <path d="M10 6h9q2 0 2 2v9q0 2-2 2H4q-2 0-2-2v-5" /><path d="M11 9h7v7H5v-3q4 0 6-4z" fill="#111" stroke="none" />
          <path d="M23 11v3" /><path d="M7 2v3M3 2v3M2 6h6v2q-3 4-6 0z" fill="#111" />
        </svg>
        <p class="clock">15:09<br />2022/11/30</p>
        <span class="badge">2</span>
      </div>
    </footer>
  </div>
</template>

<style>
body {
  margin: 0;
}
</style>

<style scoped>
* {
  box-sizing: border-box;
}
.window {
  display: flex;
  flex-direction: column;
  height: 100vh;
  overflow: hidden;
  font-family: 'Noto Sans', 'Noto Sans CJK SC', sans-serif;
  color: #262626;
}
button {
  padding: 0;
  border: 0;
  background: none;
  font: inherit;
  color: inherit;
}
a {
  color: inherit;
  text-decoration: none;
}
p,
h2,
h3,
h4,
ul {
  margin: 0;
  padding: 0;
  font-weight: 400;
}
i,
em {
  font-style: normal;
}
svg {
  display: block;
  flex: none;
}

/* browser frame */
.chrome {
  flex: none;
  background: #f9f2e6;
  border-bottom: 1px solid #d6d1c8;
  font-size: 15px;
  color: #111;
}
.tabstrip {
  display: flex;
  height: 43px;
  background: #73e5b9;
}
.tabs {
  display: flex;
  flex: 0 1 1505px;
  padding-left: 10px;
}
.tab {
  display: flex;
  flex: 1 1 0;
  min-width: 0;
  align-items: center;
  gap: 10px;
  padding: 0 13px 0 15px;
  position: relative;
}
.tab::after {
  content: '';
  position: absolute;
  right: 0;
  top: 10px;
  height: 24px;
  border-right: 1px solid #3f8a6d;
}
.tab:nth-child(3)::after {
  display: none;
}
.tab.active {
  background: #f9f2e6;
  border-radius: 10px 10px 0 0;
}
.tab.active::before,
.tab.active::after {
  content: '';
  position: absolute;
  top: auto;
  bottom: 0;
  width: 10px;
  height: 10px;
  border: 0;
}
.tab.active::before {
  left: -10px;
  background: radial-gradient(circle at 0 0, transparent 10px, #f9f2e6 10px);
}
.tab.active::after {
  right: -10px;
  background: radial-gradient(circle at 100% 0, transparent 10px, #f9f2e6 10px);
}
.tab-title {
  flex: 1;
  overflow: hidden;
  white-space: nowrap;
  line-height: 24px;
  mask-image: linear-gradient(90deg, #000 90%, transparent);
}
.tab-close,
.tab-close svg {
  width: 12px;
  height: 12px;
}
.tab-close svg {
  fill: none;
  stroke: #111;
  stroke-width: 2;
}
.i20 {
  width: 20px;
  height: 20px;
  overflow: visible;
}
.new-tab {
  width: 54px;
}
.new-tab svg {
  width: 16px;
  height: 16px;
  margin: 0 auto;
  stroke: #111;
  stroke-width: 2;
}
.win-controls {
  display: flex;
  height: 37px;
  margin-left: auto;
}
.win-controls button {
  width: 57px;
}
.win-controls svg {
  width: 14px;
  height: 14px;
  margin: 0 auto;
  fill: none;
  stroke: #222;
  stroke-width: 1;
}
.toolbar {
  display: flex;
  align-items: center;
  height: 45px;
  padding: 0 8px 0 7px;
}
.tool {
  display: flex;
  flex: none;
  align-items: center;
  justify-content: center;
  width: 40px;
  height: 35px;
}
.line-icon {
  width: 20px;
  height: 20px;
  fill: none;
  stroke: #53575c;
  stroke-width: 2;
}
.dim .line-icon {
  stroke: #b6b2aa;
}
.address {
  display: flex;
  flex: 1;
  align-items: center;
  height: 35px;
  margin: 0 7px 0 8px;
  padding: 0 2px 0 16px;
  border-radius: 18px;
  background: #dad6cb;
}
.lock {
  width: 12px;
  height: 16px;
}
.address input {
  flex: 1;
  min-width: 0;
  margin-left: 14px;
  padding: 0;
  border: 0;
  font: inherit;
  font-size: 18px;
  line-height: 24px;
  color: transparent;
  background: linear-gradient(90deg, #202124 100px, #5f6368 100px);
  background-clip: text;
}
.extensions {
  display: flex;
}
.avatar {
  width: 28px;
  height: 28px;
}
.bookmarks {
  display: flex;
  align-items: center;
  height: 40px;
  padding: 0 12px 4px 8px;
}
.folders {
  display: flex;
  gap: 23px;
  margin-left: 12px;
}
.folder {
  display: flex;
  align-items: center;
  gap: 12px;
  line-height: 24px;
  white-space: nowrap;
}
.folder-icon {
  width: 16px;
  height: 18px;
  border: 1px solid #f2cf55;
  border-radius: 2px;
  background: #ffe58f;
}
.overflow {
  margin-left: auto;
  width: 38px;
  font-weight: 700;
  color: #555;
}
.others {
  padding-left: 16px;
  border-left: 1px solid #cfcac0;
}

/* page */
.page {
  display: flex;
  flex: 1;
  min-height: 0;
}
.viewport {
  position: relative;
  flex: 1;
  min-width: 0;
  overflow: hidden;
  background: #f7f8fa;
  font-size: 22px;
  line-height: 32px;
}
.banner-edge {
  width: 116px;
  height: 3px;
  margin-left: 54px;
  border-radius: 0 0 12px 12px / 0 0 3px 3px;
  background: #92cfd3;
}
.columns {
  display: grid;
  grid-template-columns: 468fr 1307fr;
  gap: 25px;
  padding: 50px 50px 0;
}
.card {
  border-radius: 12px;
  background: #fff;
  box-shadow: 0 6px 12px rgba(0, 0, 0, 0.06), 0 2px 30px rgba(0, 0, 0, 0.1);
}
.profile {
  padding: 35px 25px 60px;
}
.follow {
  display: flex;
  align-items: center;
  justify-content: center;
  gap: 47px;
  color: #5c5c5c;
}
.follow div {
  width: 66px;
  text-align: center;
}
.follow span {
  display: block;
  line-height: 30px;
}
.follow b {
  display: block;
  font-weight: 400;
  font-size: 21px;
  line-height: 34px;
  color: #262626;
}
.follow i {
  width: 2px;
  height: 44px;
  background: #e3e3e3;
}
.edit,
.resume {
  display: block;
  width: 100%;
  height: 55px;
  padding-bottom: 2px;
  border-radius: 12px;
}
.edit {
  margin-top: 21px;
  background: #eef8f1;
  color: #2db55d;
}
.resume {
  margin-top: 26px;
  background: #f0f0f0;
  color: #5c5c5c;
}
.job {
  margin-top: 25px;
  border: 1px solid #f6f5ec;
  border-radius: 12px;
  background: linear-gradient(#fcfbee, #fefdf5 90px);
}
.job h3 {
  padding: 19px 25px 22px;
  font-size: 22px;
}
.job-body {
  padding: 18px 25px 19px;
  border-radius: 12px;
  background: #fff;
}
.job-title {
  display: flex;
  align-items: center;
  gap: 6px;
  color: #5c5c5c;
}
.job-title svg {
  width: 22px;
  height: 22px;
  fill: none;
  stroke: #5c5c5c;
  stroke-width: 2;
}
.job-steps {
  display: flex;
  align-items: center;
  gap: 7px;
  margin-top: 8px;
  font-size: 21px;
}
.segments {
  display: flex;
  flex: 1;
  gap: 6px;
  height: 12px;
  overflow: hidden;
  border-radius: 6px;
}
.segments span {
  flex: 1;
  background: #f0f0f0;
}
.job-note {
  margin-top: 6px;
  color: #8c8c8c;
}
.profile h2 {
  font-size: 25px;
}
.profile .bold {
  margin-top: 39px;
  font-weight: 700;
}
.bio {
  margin-top: 28px;
  color: #5c5c5c;
}
.facts {
  display: grid;
  gap: 12px;
  margin-top: 24px;
  list-style: none;
  color: #5c5c5c;
}
.facts li {
  display: flex;
  align-items: center;
  gap: 12px;
}
.facts svg {
  width: 28px;
  height: 28px;
  fill: none;
  stroke: #5c5c5c;
  stroke-width: 2;
}
.profile hr {
  height: 1px;
  margin: 30px 0 29px;
  border: 0;
  background: #f0f0f0;
}

.right {
  display: flex;
  flex-direction: column;
  gap: 25px;
  min-width: 0;
}
.top-cards {
  display: grid;
  grid-template-columns: 1fr 1fr;
  gap: 25px;
}
h4 {
  font-size: 19px;
  line-height: 28px;
  color: #8c8c8c;
}
.solved {
  display: flex;
  padding: 25px 50px 41px 20px;
}
.solved-left {
  width: 216px;
}
.ring {
  position: relative;
  width: 148px;
  margin: 42px auto 0;
}
.ring-text {
  position: absolute;
  inset: 0;
  display: flex;
  flex-direction: column;
  align-items: center;
  padding-top: 39px;
}
.ring-text b {
  font-size: 36px;
  font-weight: 600;
  line-height: 46px;
}
.ring-text span {
  font-size: 19px;
  line-height: 34px;
  color: #8c8c8c;
}
.levels {
  flex: 1;
  display: grid;
  align-content: start;
  gap: 28px;
  padding-top: 28px;
  margin-left: 21px;
}
.level-row {
  display: flex;
  align-items: center;
  height: 32px;
  font-size: 19px;
}
.level-name {
  width: 83px;
  color: #8c8c8c;
}
.level-count {
  display: flex;
  align-items: center;
  gap: 8px;
  margin-top: -4px;
}
.level-count b {
  font-size: 24px;
  font-weight: 500;
}
.level-count i {
  font-size: 18px;
  color: #bfbfbf;
}
.beat {
  margin-left: auto;
  color: #8c8c8c;
}
.beat b {
  margin-left: 4px;
  font-size: 18px;
  font-weight: 500;
  color: #5c5c5c;
}
.beat.none {
  color: #bfbfbf;
}
.level-bar {
  height: 6px;
  margin-top: 9px;
  border-radius: 3px;
  overflow: hidden;
  background: #e0f4e8;
}
.level-bar span {
  display: block;
  height: 6px;
  border-radius: 3px;
  background: #00af9b;
}
.medium .level-bar {
  background: #fff1d6;
}
.medium .level-bar span {
  background: #ffb800;
}
.hard .level-bar {
  background: #ffe0e1;
}
.hard .level-bar span {
  background: #ff2d55;
}
.medals {
  display: flex;
  align-items: center;
  justify-content: space-between;
  padding: 25px 64px 30px 25px;
}
.medal-text {
  align-self: stretch;
  display: flex;
  flex-direction: column;
}
.medal-count {
  font-size: 36px;
  line-height: 46px;
}
.soon {
  margin-top: auto;
}
.medal-next {
  margin-top: 3px;
  font-size: 25px;
}
.medal {
  width: 98px;
  height: 110px;
}
.medal text {
  font-size: 19px;
  font-weight: 600;
  fill: #fff;
}

.calendar {
  padding: 25px;
}
.cal-head {
  display: flex;
  align-items: center;
  height: 44px;
}
.cal-title {
  font-size: 25px;
  color: #5c5c5c;
}
.cal-title b {
  margin: 0 1px;
  font-size: 30px;
  font-weight: 600;
  color: #262626;
}
.cal-title em {
  font-size: 22px;
  color: #262626;
}
.info {
  width: 22px;
  height: 22px;
  margin-left: 8px;
  fill: none;
  stroke: #bfbfbf;
  stroke-width: 2;
}
.stat {
  margin-right: 27px;
  font-size: 19px;
  color: #8c8c8c;
}
.stat.first {
  margin-left: auto;
}
.stat b {
  font-size: 18px;
  font-weight: 600;
  color: #5c5c5c;
}
.picker {
  position: relative;
  width: 150px;
  margin-left: 6px;
}
.picker select {
  appearance: none;
  width: 100%;
  height: 44px;
  margin: 0;
  padding: 0 18px;
  border: 0;
  border-radius: 8px;
  background: #f2f3f5;
  font-family: inherit;
  font-size: 19px;
  color: #5c5c5c;
}
.picker svg {
  position: absolute;
  right: 20px;
  top: 14px;
  width: 16px;
  height: 16px;
  fill: none;
  stroke: #555;
  stroke-width: 2;
}
.heatmap {
  width: 100%;
  margin-top: 27px;
}
.heatmap text {
  font-size: 19px;
  fill: #b3b8c2;
}
.l0 {
  fill: #f2f2f2;
}
.l1 {
  fill: #98dbae;
}
.l2 {
  fill: #2db55d;
}
.l3 {
  fill: #21803f;
}
.l4 {
  fill: #1a5b2f;
}

.recent {
  padding: 25px;
}
.recent-head {
  display: flex;
  align-items: center;
}
.section-tab {
  display: flex;
  align-items: center;
  gap: 15px;
  height: 69px;
  padding: 0 32px 0 34px;
  border-radius: 8px;
  color: #5c5c5c;
}
.section-tab svg {
  width: 32px;
  height: 32px;
  fill: none;
  stroke: currentColor;
  stroke-width: 2;
}
.section-tab.active {
  background: #f2f3f5;
  color: #262626;
}
.all {
  display: flex;
  align-items: center;
  gap: 6px;
  margin-left: auto;
  padding-right: 2px;
  font-size: 19px;
  color: #8c8c8c;
}
.all svg {
  width: 16px;
  height: 16px;
  fill: none;
  stroke: #8c8c8c;
  stroke-width: 2;
}
.problem {
  display: flex;
  align-items: center;
  justify-content: space-between;
  height: 90px;
  margin-top: 28px;
  padding: 0 26px 2px;
  border-radius: 8px;
  background: #f7f7f7;
}
.problem span {
  color: #8c8c8c;
}
.help {
  position: absolute;
  right: 48px;
  bottom: 47px;
  width: 75px;
  height: 75px;
  border-radius: 12px;
  background: #fff;
  box-shadow: 0 0 10px rgba(0, 0, 0, 0.15);
}
.help svg {
  width: 32px;
  height: 32px;
  margin: 0 auto;
  fill: none;
  stroke: #007aff;
  stroke-width: 3;
  stroke-linecap: round;
  stroke-linejoin: round;
}
.scrollbar {
  position: relative;
  display: flex;
  flex-direction: column;
  align-items: center;
  width: 20px;
  padding: 9px 0 7px;
  background: #f0f0f0;
}
.scrollbar .up,
.scrollbar .down {
  width: 10px;
  height: 6px;
  fill: #555;
}
.scrollbar .down {
  margin-top: auto;
}
.thumb {
  width: 17px;
  height: 239px;
  margin-top: 72px;
  background: #c1c1c1;
}
.handle {
  position: absolute;
  right: 0;
  top: 192px;
  width: 15px;
  height: 78px;
  fill: #e6efff;
  stroke: #3f87ff;
  stroke-width: 1;
}

/* taskbar */
.taskbar {
  display: flex;
  flex: none;
  align-items: center;
  justify-content: flex-end;
  height: 60px;
  border-top: 1px solid #c0b3b8;
  background: linear-gradient(90deg, #f2e5ee, #f8e1e0 20%, #f3dfe0 50%, #f6e2e3 75%, #f2e3ef);
}
.apps {
  display: flex;
  gap: 7px;
  margin-right: 20px;
}
.app {
  position: relative;
  width: 48px;
  height: 48px;
  border-radius: 5px;
}
.app svg {
  width: 30px;
  height: 30px;
  margin: 0 auto;
}
.app.open {
  background: #fbe6e8;
}
.app.focus {
  background: #faf2f1;
}
.app.open::after,
.app.running::after,
.app.focus::after {
  content: '';
  position: absolute;
  left: 20px;
  bottom: 0;
  width: 8px;
  height: 4px;
  border-radius: 2px;
  background: #8a8083;
}
.app.open::after {
  background: #cf2a22;
}
.app.focus::after {
  left: 14px;
  width: 20px;
  background: #ea4c56;
}
.tray {
  display: flex;
  align-items: center;
  padding-right: 24px;
}
.tray-icon {
  width: 20px;
  height: 20px;
  margin: 0 5px;
}
.thin {
  fill: none;
  stroke: #111;
  stroke-width: 2;
}
.ime {
  width: 49px;
  padding-right: 12px;
  text-align: center;
  font-size: 19px;
  color: #111;
}
.clock {
  width: 79px;
  margin: -4px 0 0 10px;
  text-align: right;
  font-size: 14px;
  line-height: 20px;
  color: #111;
}
.badge {
  width: 20px;
  height: 20px;
  margin-left: 9px;
  border-radius: 10px;
  background: #e02b3a;
  color: #fff;
  font-size: 14px;
  line-height: 20px;
  text-align: center;
}
</style>
